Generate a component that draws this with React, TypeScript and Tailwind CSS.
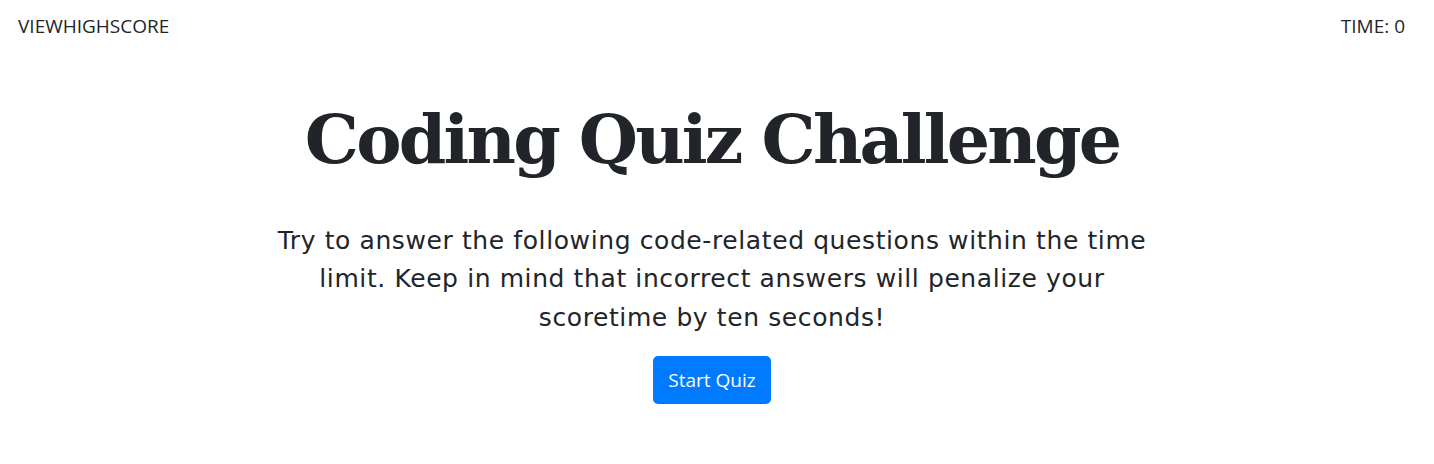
export default function App() {
  return (
    <div className="min-h-[464px] bg-white text-[#212529]">
      <header className="flex items-center justify-between pl-[18px] pr-[29px] pt-[12px] font-['Open_Sans','Noto_Sans',sans-serif] text-[19px] leading-7">
        <span>VIEWHIGHSCORE</span>
        <span>TIME: 0</span>
      </header>

      <main className="flex flex-col items-center pr-[10px] text-center">
        <h1 className="mt-[59px] font-['DejaVu_Serif',serif] text-[68px] font-bold leading-[1.2] tracking-[-2.8px]">
          Coding Quiz Challenge
        </h1>
        <p className="mt-[41px] font-['DejaVu_Sans','Verdana',sans-serif] text-[25px] leading-[38.5px] tracking-[0.6px]">
          Try to answer the following code-related questions within the time
          <br />
          limit. Keep in mind that incorrect answers will penalize your
          <br />
          scoretime by ten seconds!
        </p>
        <button className="mt-[19px] h-[48px] rounded-[5px] bg-[#007bff] px-[15px] font-['Open_Sans','Noto_Sans',sans-serif] text-[19px] text-white">
          Start Quiz
        </button>
      </main>
    </div>
  );
}
